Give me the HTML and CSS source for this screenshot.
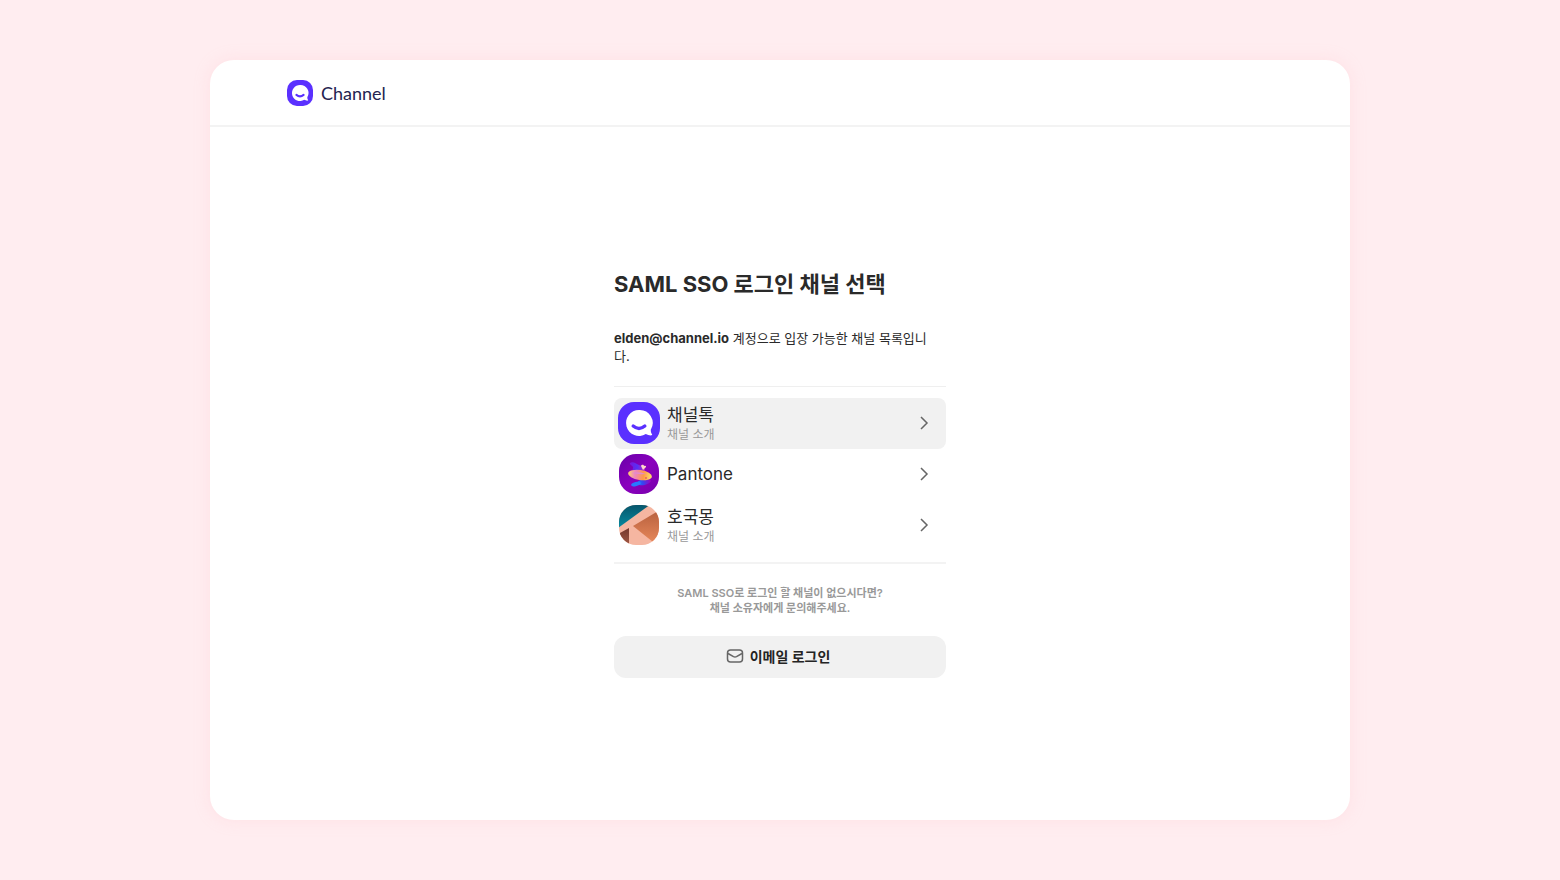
FILE: index.html
```html
<!DOCTYPE html>
<html lang="ko">
<head>
  <meta charset="UTF-8" />
  <meta name="viewport" content="width=device-width, initial-scale=1.0"/>
  <title>SAML SSO 로그인 채널 선택</title>
  <link rel="stylesheet" href="styles.css">
</head>
<body>

  <div class="window">
    <header class="header">
      <a class="brand" href="#">
        <svg class="brand-icon" viewBox="0 0 42 42" aria-hidden="true">
          <rect width="42" height="42" rx="16" fill="#5a30ff"/>
          <path d="M21 8a13 13 0 1 0 6.800 24.100c2 1 4.200 1.500 5.800 1.200.6-.1.700-.6.400-1-.9-1.300-1.300-2.900-1.200-4.600A13 13 0 0 0 21 8z" fill="#fff"/>
          <path d="M15.200 24q5.800 4.800 11.600 0" fill="none" stroke="#5a30ff" stroke-width="3.400" stroke-linecap="round"/>
        </svg>
        <span>Channel</span>
      </a>
    </header>

    <main class="main">
      <section class="login">
        <h1>SAML SSO 로그인 채널 선택</h1>
        <p class="desc"><strong>elden@channel.io</strong> 계정으로 입장 가능한 채널 목록입니다.</p>

        <ul class="channels">
          <li>
            <a class="channel active" href="#">
              <svg class="avatar" viewBox="0 0 42 42" aria-hidden="true">
                <rect width="42" height="42" rx="16" fill="#5a30ff"/>
                <path d="M21 8a13 13 0 1 0 6.800 24.100c2 1 4.200 1.500 5.800 1.200.6-.1.700-.6.400-1-.9-1.300-1.300-2.900-1.200-4.600A13 13 0 0 0 21 8z" fill="#fff"/>
                <path d="M15.200 24q5.800 4.800 11.600 0" fill="none" stroke="#5a30ff" stroke-width="3.400" stroke-linecap="round"/>
              </svg>
              <span class="info">
                <span class="name">채널톡</span>
                <span class="sub">채널 소개</span>
              </span>
              <svg class="arrow" viewBox="0 0 16 16" aria-hidden="true"><path d="M5 2l6 6-6 6"/></svg>
            </a>
          </li>
          <li>
            <a class="channel" href="#">
              <svg class="avatar" viewBox="0 0 42 42" aria-hidden="true">
                <defs>
                  <linearGradient id="violet" x1="0" y1="0" x2="1" y2="1">
                    <stop offset="0" stop-color="#6700a8"/>
                    <stop offset=".5" stop-color="#8a00bd"/>
                    <stop offset="1" stop-color="#7800ac"/>
                  </linearGradient>
                  <linearGradient id="top-blob" x1="0" y1="0" x2="1" y2="0">
                    <stop offset="0" stop-color="#7a14dc"/>
                    <stop offset=".5" stop-color="#5632f5"/>
                    <stop offset="1" stop-color="#c01fc0"/>
                  </linearGradient>
                  <linearGradient id="mid-blob" x1="0" y1="0" x2="1" y2="0">
                    <stop offset="0" stop-color="#ffd36b"/>
                    <stop offset=".3" stop-color="#ee86c0"/>
                    <stop offset=".65" stop-color="#ff9a45"/>
                    <stop offset="1" stop-color="#ffe070"/>
                  </linearGradient>
                  <linearGradient id="low-blob" x1="0" y1="0" x2="1" y2="0">
                    <stop offset="0" stop-color="#2a70ff"/>
                    <stop offset=".4" stop-color="#3546f0"/>
                    <stop offset="1" stop-color="#a000bd"/>
                  </linearGradient>
                </defs>
                <rect x="1" y="1" width="40" height="40" rx="17" fill="url(#violet)"/>
                <path d="M12 10c3-2 6 1 9 2s6 2 6 5-4 3-8 2-5-2-4-4-4-3-3-5z" fill="url(#top-blob)"/>
                <path d="M23 13c1-2 3-1 3 0 2-1 3 1 1 2l-2 2z" fill="#ffd6cb"/>
                <ellipse cx="26" cy="29" rx="7" ry="3" fill="url(#low-blob)" transform="rotate(-12 26 29)"/>
                <ellipse cx="18" cy="31" rx="5" ry="2" fill="#2879ff" transform="rotate(-15 18 31)"/>
                <ellipse cx="22" cy="22" rx="12" ry="5" fill="url(#mid-blob)" transform="rotate(8 22 22)"/>
                <path d="M13 20q8-2 15 1-8 .6-15-1z" fill="#e28bd0"/>
                <circle cx="28" cy="25" r=".8" fill="#d82f68"/>
              </svg>
              <span class="info">
                <span class="name">Pantone</span>
              </span>
              <svg class="arrow" viewBox="0 0 16 16" aria-hidden="true"><path d="M5 2l6 6-6 6"/></svg>
            </a>
          </li>
          <li>
            <a class="channel" href="#">
              <svg class="avatar" viewBox="0 0 42 42" aria-hidden="true">
                <defs>
                  <clipPath id="tile"><rect x="1" y="1" width="40" height="40" rx="17"/></clipPath>
                  <linearGradient id="teal" x1="0" y1="0" x2="0" y2="1">
                    <stop offset="0" stop-color="#07546a"/>
                    <stop offset="1" stop-color="#078ba0"/>
                  </linearGradient>
                  <linearGradient id="copper" x1="0" y1="0" x2="0" y2="1">
                    <stop offset="0" stop-color="#b65f3d"/>
                    <stop offset="1" stop-color="#e5875a"/>
                  </linearGradient>
                  <linearGradient id="shade" x1="0" y1="0" x2="0" y2="1">
                    <stop offset="0" stop-color="#75382d"/>
                    <stop offset="1" stop-color="#a35a45"/>
                  </linearGradient>
                </defs>
                <g clip-path="url(#tile)">
                  <rect width="42" height="42" fill="#f5b6a1"/>
                  <path d="M0 0h33L0 24z" fill="url(#teal)"/>
                  <path d="M42 6v30l-7 2-20-16z" fill="url(#copper)"/>
                  <path d="M0 30l11-6v18H0z" fill="url(#shade)"/>
                </g>
              </svg>
              <span class="info">
                <span class="name">호국몽</span>
                <span class="sub">채널 소개</span>
              </span>
              <svg class="arrow" viewBox="0 0 16 16" aria-hidden="true"><path d="M5 2l6 6-6 6"/></svg>
            </a>
          </li>
        </ul>

        <p class="note">SAML SSO로 로그인 할 채널이 없으시다면?<br>채널 소유자에게 문의해주세요.</p>

        <button class="btn" type="button">
          <svg viewBox="0 0 18 18" aria-hidden="true">
            <rect x="1.500" y="3" width="15" height="12" rx="3"/>
            <path d="M2 6.500l5.500 3.200q1.500.8 3 0L16 6.500"/>
          </svg>
          <span>이메일 로그인</span>
        </button>
      </section>
    </main>
  </div>

</body>
</html>
```
FILE: styles.css
```css
* {
  box-sizing: border-box;
}

body {
  margin: 0;
  padding: 60px;
  font-family: Inter, "Noto Sans CJK KR", sans-serif;
  background: #ffedf0;
  color: #2a2a2a;
}

a {
  color: inherit;
  text-decoration: none;
}

.window {
  display: flex;
  flex-direction: column;
  max-width: 1140px;
  min-height: calc(100vh - 120px);
  margin: 0 auto;
  background: #fff;
  border-radius: 24px;
  box-shadow: 0 0 16px rgba(255, 190, 200, 0.25);
}

.header {
  display: flex;
  align-items: center;
  height: 67px;
  padding: 0 77px;
  border-bottom: 2px solid #f3f3f3;
}

.brand {
  display: flex;
  align-items: center;
  gap: 8px;
  font-family: Lato, sans-serif;
  font-size: 18px;
  line-height: 26px;
  color: #242350;
}

.brand-icon {
  width: 26px;
  height: 26px;
}

.main {
  flex: 1;
  display: flex;
  align-items: center;
  justify-content: center;
  padding-bottom: 2px;
}

.login {
  width: 100%;
  max-width: 332px;
}

h1 {
  margin: 0 0 29px;
  font-size: 22px;
  line-height: 32px;
  font-weight: 700;
}

.desc {
  margin: 0 0 21px;
  padding-right: 8px;
  font-size: 13px;
  line-height: 18px;
  word-break: break-all;
}

.channels {
  margin: 0 0 22px;
  padding: 11px 0;
  list-style: none;
  border-top: 1px solid #efefef;
  border-bottom: 2px solid #f3f3f3;
}

.channel {
  display: flex;
  align-items: center;
  gap: 7px;
  height: 51px;
  padding: 0 14px 0 4px;
  border-radius: 8px;
}

.channel.active,
.channel:hover {
  background: #f1f1f1;
}

.avatar {
  width: 42px;
  height: 42px;
}

.info {
  flex: 1;
  display: flex;
  flex-direction: column;
}

.name {
  font-size: 17px;
  line-height: 22px;
}

.sub {
  font-size: 12px;
  line-height: 17px;
  color: #999;
}

.arrow {
  width: 16px;
  height: 16px;
  fill: none;
  stroke: #666;
  stroke-width: 1.5;
}

.note {
  margin: 0 0 20px;
  font-size: 11px;
  line-height: 15px;
  font-weight: 600;
  text-align: center;
  color: #999;
}

.btn {
  display: flex;
  align-items: center;
  justify-content: center;
  gap: 6px;
  width: 100%;
  height: 42px;
  padding: 0 4px 2px 0;
  border: none;
  border-radius: 12px;
  background: #f1f1f1;
  color: #242424;
  font-family: inherit;
  font-size: 14px;
  font-weight: 700;
  cursor: pointer;
}

.btn svg {
  width: 18px;
  height: 18px;
  fill: none;
  stroke: #666;
  stroke-width: 1.5;
}
```
